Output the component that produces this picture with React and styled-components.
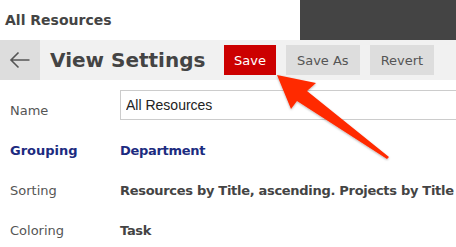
import React from "react";
import styled, { createGlobalStyle } from "styled-components";

const Global = createGlobalStyle`
  html, body { margin: 0; padding: 0; background: #fff; }
  body { font-family: "DejaVu Sans", Verdana, sans-serif; overflow: hidden; width: 456px; height: 247px; }
`;

const Page = styled.div`
  position: relative;
  width: 456px;
  height: 247px;
  overflow: hidden;
`;

const Header = styled.div`
  display: flex;
  height: 40px;
  align-items: stretch;
`;

const PageTitle = styled.div`
  flex: 1;
  display: flex;
  align-items: center;
  padding-left: 5px;
  font-weight: bold;
  font-size: 14px;
  color: #444;
`;

const DarkBlock = styled.div`
  width: 156px;
  background: #444;
`;

const Toolbar = styled.div`
  display: flex;
  align-items: center;
  height: 40px;
  background: #f1f1f1;
`;

const BackButton = styled.button`
  width: 40px;
  height: 40px;
  border: none;
  padding: 0;
  background: #ddd;
  display: flex;
  align-items: center;
  justify-content: center;
`;

const Title = styled.h1`
  margin: 0;
  width: 184px;
  box-sizing: border-box;
  padding-left: 10px;
  font-size: 20px;
  font-weight: bold;
  color: #444;
  white-space: nowrap;
`;

const Buttons = styled.div`
  display: flex;
  gap: 10px;
`;

const Btn = styled.button`
  height: 30px;
  border: none;
  padding: 0 ${(p) => p.$pad || 10}px;
  font-family: "DejaVu Sans", Verdana, sans-serif;
  font-size: 13px;
  background: ${(p) => (p.$primary ? "#cc0000" : "#dddddd")};
  color: ${(p) => (p.$primary ? "#fff" : "#555")};
`;

const Form = styled.div`
  padding-top: 10px;
`;

const Row = styled.div`
  display: grid;
  grid-template-columns: 120px 1fr;
  height: 40px;
`;

const Label = styled.div`
  padding-left: 10px;
  display: flex;
  align-items: center;
  font-size: 13px;
  font-weight: ${(p) => (p.$accent ? "bold" : "normal")};
  color: ${(p) => (p.$accent ? "#1c2b80" : "#555")};
`;

const Value = styled.div`
  display: flex;
  align-items: center;
  font-size: 13px;
  letter-spacing: -0.3px;
  font-weight: bold;
  white-space: nowrap;
  color: ${(p) => (p.$accent ? "#1c2b80" : "#444")};
`;

const Input = styled.input`
  box-sizing: border-box;
  height: 30px;
  width: 360px;
  border: 1px solid #ccc;
  padding: 0 5px;
  font-family: "Liberation Sans", Arial, sans-serif;
  font-size: 14px;
  color: #222;
  outline: none;
`;

const Arrow = styled.svg`
  position: absolute;
  left: 0;
  top: 0;
  pointer-events: none;
`;

export default function App() {
  return (
    <Page>
      <Global />
      <Header>
        <PageTitle>All Resources</PageTitle>
        <DarkBlock />
      </Header>
      <Toolbar>
        <BackButton aria-label="Back">
          <svg width="22" height="18" viewBox="0 0 22 18">
            <path d="M20.5 9H2M9.5 1.5L2 9l7.5 7.5" fill="none" stroke="#555" strokeWidth="1.6" />
          </svg>
        </BackButton>
        <Title>View Settings</Title>
        <Buttons>
          <Btn $primary>Save</Btn>
          <Btn $pad={11}>Save As</Btn>
          <Btn $pad={11}>Revert</Btn>
        </Buttons>
      </Toolbar>
      <Form>
        <Row>
          <Label>Name</Label>
          <Input defaultValue="All Resources" />
        </Row>
        <Row>
          <Label $accent>Grouping</Label>
          <Value $accent>Department</Value>
        </Row>
        <Row>
          <Label>Sorting</Label>
          <Value>Resources by Title, ascending. Projects by Title</Value>
        </Row>
        <Row>
          <Label>Coloring</Label>
          <Value>Task</Value>
        </Row>
      </Form>
      <Arrow width="456" height="247" viewBox="0 0 456 247">
        <defs>
          <filter id="sh" x="-20%" y="-20%" width="140%" height="140%">
            <feDropShadow dx="0" dy="1" stdDeviation="1" floodColor="#000" floodOpacity="0.3" />
          </filter>
        </defs>
        <polygon
          points="277,75 316,83 307,91 389,157 387,159 297,101 291,109"
          fill="#ff2a00"
          filter="url(#sh)"
        />
      </Arrow>
    </Page>
  );
}
